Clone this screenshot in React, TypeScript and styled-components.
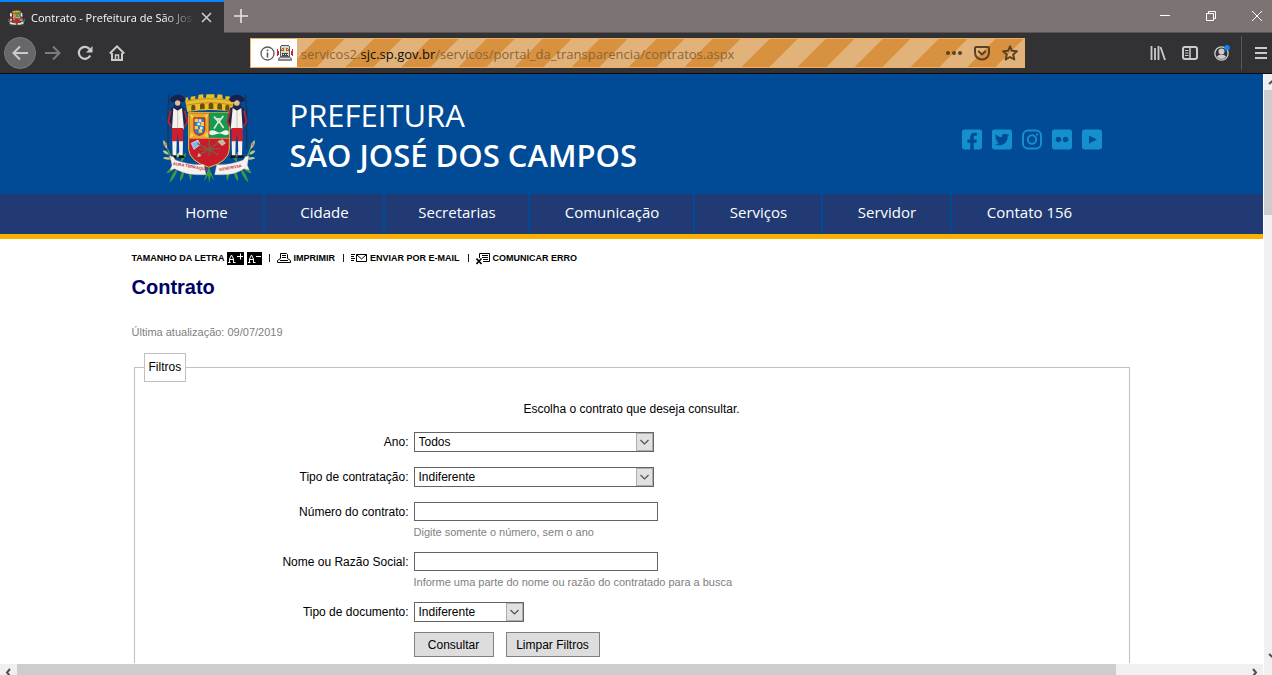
import React from "react";
import styled, { createGlobalStyle, css } from "styled-components";
import { FaFacebookSquare, FaTwitterSquare, FaFlickr } from "react-icons/fa";

const GlobalStyle = createGlobalStyle`
  *, *::before, *::after { box-sizing: border-box; }
  body { margin: 0; background: #fff; font-family: "Liberation Sans", Arial, sans-serif; font-size: 12px; color: #000; }
  button, input, select { font: inherit; color: inherit; }
`;

const uiFont = `"Open Sans", "Noto Sans", sans-serif`;

/* ---------- browser window ---------- */

const Window = styled.div`
  display: flex;
  flex-direction: column;
  height: 100vh;
  overflow: hidden;
`;

const TabStrip = styled.div`
  display: flex;
  height: 33px;
  flex: none;
  background: #7b7473;
`;

const Tab = styled.div`
  display: flex;
  align-items: center;
  width: 224px;
  padding: 0 12px 0 8px;
  border-top: 2px solid #0a84ff;
  background: #323234;
  color: #f9f9fa;
  font: 11px/20px ${uiFont};
`;

const TabTitle = styled.span`
  flex: 1;
  min-width: 0;
  margin: 0 5px 0 6px;
  overflow: hidden;
  white-space: nowrap;
  mask-image: linear-gradient(to left, transparent, #000 32px);
`;

const StripRest = styled.div`
  display: flex;
  flex: 1;
  justify-content: space-between;
  border-bottom: 1px solid #5a5553;
`;

const PlainButton = styled.button<{ $w: number }>`
  display: flex;
  align-items: center;
  justify-content: center;
  flex: none;
  width: ${(p) => p.$w}px;
  height: 32px;
  padding: 0;
  border: 0;
  background: none;
  color: #fff;
`;

const ButtonGroup = styled.div`
  display: flex;
  align-items: center;
  margin-right: -8px;
`;

const Toolbar = styled.div`
  display: flex;
  align-items: center;
  flex: none;
  height: 41px;
  padding-left: 4px;
  background: #323234;
  border-bottom: 1px solid #0c0c0d;
  color: #c4c4c5;
`;

const ToolButton = styled(PlainButton)<{ $round?: boolean; $dim?: boolean }>`
  color: ${(p) => (p.$dim ? "#7c7c7d" : "#cbcbcc")};
  ${(p) =>
    p.$round &&
    css`
      border: 1px solid #7b7b7c;
      border-radius: 50%;
      background: #67676a;
    `}
`;

const Spring = styled.div`
  flex: 151 1 0;
`;

const UrlBar = styled.div`
  display: flex;
  align-items: center;
  flex: 1000 1 0;
  min-width: 0;
  height: 30px;
  border: 1px solid #e9b068;
  background: repeating-linear-gradient(-45deg, #e1b37a 0 20px, #d7913f 20px 40px);
  color: #5b4023;
`;

const Identity = styled.div`
  display: flex;
  align-items: center;
  gap: 2px;
  height: 28px;
  width: 46px;
  padding-left: 9px;
  background: #fff;
`;

const UrlText = styled.div`
  flex: 1;
  min-width: 0;
  padding: 1px 0 0 4px;
  overflow: hidden;
  white-space: nowrap;
  font: 13px/20px ${uiFont};
  color: #8d6535;
  b {
    font-weight: 400;
    color: #0c0c0d;
  }
`;

const ToolDivider = styled.span`
  flex: none;
  width: 1px;
  height: 34px;
  margin-left: 3px;
  background: #58585a;
`;

const ToolbarEnd = styled.div`
  display: flex;
  justify-content: center;
  width: 30px;
  padding-left: 8px;
`;

const Viewport = styled.div`
  display: flex;
  flex: 1;
  min-height: 0;
`;

const PageColumn = styled.div`
  display: flex;
  flex-direction: column;
  flex: 1;
  min-width: 0;
`;

const Page = styled.div`
  flex: 1;
  min-height: 0;
  overflow: hidden;
  background: #fff;
  border-bottom: 1px solid #fff;
`;

const VTrack = styled.div`
  width: 9px;
  flex: none;
  display: flex;
  flex-direction: column;
  border-left: 1px solid #fff;
  background: #f0f0f0;
  overflow: hidden;
`;

const HTrack = styled.div`
  display: flex;
  align-items: flex-start;
  flex: none;
  height: 11px;
  background: #f0f0f0;
  overflow: hidden;
`;

const VThumb = styled.div`
  height: 125px;
  background: #cdcdcd;
`;

const HThumb = styled.div`
  flex: none;
  width: 87%;
  height: 11px;
  background: #cdcdcd;
`;

const ArrowBox = styled.div`
  display: flex;
  align-items: center;
  justify-content: center;
  width: 17px;
  height: 16px;
  flex: none;
`;

const Gap = styled.div`
  flex: 1;
`;

const Corner = styled.div`
  height: 12px;
`;

/* ---------- site header ---------- */

const Masthead = styled.header`
  background: #004a96;
`;

const Wrap = styled.div`
  max-width: 1000px;
  margin: 0 auto;
`;

const Brand = styled(Wrap)`
  display: flex;
  align-items: center;
  height: 120px;
  padding: 6px 30px 0 18px;
`;

const BrandName = styled.a`
  margin: 0 0 4px 20px;
  color: #fff;
  text-decoration: none;
  font: 31px/40px ${uiFont};
`;

const BrandCity = styled.strong`
  display: block;
  font-weight: 600;
`;

const Social = styled.div`
  display: flex;
  gap: 10px;
  margin-left: auto;
  padding-top: 5px;
  a {
    display: flex;
    align-items: center;
    width: 20px;
    height: 20px;
    color: #1590cf;
  }
  svg {
    flex: none;
    width: 20px;
    height: 23px;
  }
`;

const Nav = styled.nav`
  background: #213a73;
  border-bottom: 5px solid #fbb000;
`;

const NavList = styled(Wrap)`
  display: flex;
  padding-left: 17px;
`;

const NavLink = styled.a<{ $w: number }>`
  width: ${(p) => p.$w}px;
  height: 40px;
  padding-left: 2px;
  border-right: 2px solid #004a96;
  color: #fff;
  text-align: center;
  text-decoration: none;
  white-space: nowrap;
  font: 500 15px/36px ${uiFont};
  &:last-child {
    border-right: 0;
  }
`;

/* ---------- content ---------- */

const Tools = styled.div`
  display: flex;
  align-items: center;
  height: 14px;
  margin-top: 12px;
  font-size: 9px;
  font-weight: 700;
  line-height: 14px;
  white-space: nowrap;
`;

const SizeButton = styled.button<{ $w: number }>`
  display: flex;
  width: ${(p) => p.$w}px;
  height: 13px;
  margin-right: 3px;
  padding: 0;
  border: 0;
  background: #000;
`;

const ToolsLabel = styled.span`
  width: 95px;
`;

const Bar = styled.span`
  width: 1px;
  height: 8px;
  margin: 0 7px 0 4px;
  background: #2a1030;
`;

const ToolsLink = styled.a`
  display: flex;
  align-items: center;
  gap: 3px;
  margin-right: 4px;
  color: #000;
  text-decoration: none;
`;

const Title = styled.h1`
  margin: 10px 0 0;
  font-size: 20px;
  line-height: 24px;
  color: #000066;
`;

const Updated = styled.p`
  margin: 26px 0 0;
  font-size: 11px;
  line-height: 14px;
  color: #808080;
`;

const Filters = styled.fieldset`
  margin: 14px 2px 0;
  padding: 0 0 90px;
  border: 1px solid #c0c0c0;
`;

const Legend = styled.legend`
  margin-left: 9px;
  padding: 0 4px;
  border: 1px solid #c0c0c0;
  line-height: 27px;
`;

const Intro = styled.p`
  margin: 19px 0 15px;
  text-align: center;
  line-height: 16px;
`;

const Fields = styled.div`
  display: flex;
  flex-direction: column;
  gap: 12px;
`;

const Row = styled.div`
  display: grid;
  grid-template-columns: 274px 1fr;
  column-gap: 5px;
  align-items: start;
  min-height: 23px;
`;

const Label = styled.label`
  line-height: 20px;
  text-align: right;
`;

const SelectBox = styled.div<{ $w: number }>`
  position: relative;
  width: ${(p) => p.$w}px;
  height: 20px;
`;

const Select = styled.select`
  display: block;
  width: 100%;
  height: 20px;
  padding: 0 20px 0 4px;
  border: 1px solid #646464;
  border-radius: 0;
  background: #fff;
  appearance: none;
`;

const SelectArrow = styled.span`
  position: absolute;
  top: 1px;
  right: 1px;
  display: flex;
  align-items: center;
  justify-content: center;
  width: 17px;
  height: 18px;
  border: 1px solid #adadad;
  background: #e1e1e1;
  pointer-events: none;
`;

const TextInput = styled.input`
  display: block;
  width: 244px;
  height: 19px;
  padding: 0 4px;
  border: 1px solid #646464;
  border-radius: 0;
  background: #fff;
`;

const Hint = styled.small`
  display: block;
  margin: 4px 0 1px;
  font-size: 11px;
  line-height: 14px;
  color: #808080;
`;

const Actions = styled.div`
  display: flex;
  gap: 12px;
  margin: 7px 0 0 279px;
`;

const ActionButton = styled.button<{ $w: number }>`
  width: ${(p) => p.$w}px;
  height: 25px;
  padding: 0;
  border: 1px solid #808080;
  border-radius: 0;
  background: #dddddd;
`;

/* ---------- drawings ---------- */

function Soldier() {
  return (
    <g>
      <path d="M-28 172V50l4-44" stroke="#2a2c3c" strokeWidth="3" fill="none" />
      <path d="M-24 24q10-16 26-16t24 14l-8 8h-34z" fill="#16234e" />
      <circle cx="1" cy="33" r="8" fill="#e8b896" />
      <path d="M-9 32l3 10h14l3-10 3 14h-26z" fill="#20243c" />
      <path d="M-20 48q20-10 42 0l7 42-9 14-3 16h-32l-3-18-9-10z" fill="#1a2850" />
      <path d="M-12 48l13 8 13-8 6 64h-36z" fill="#f6f2ee" />
      <path d="M1 54v54" stroke="#b9a7a0" strokeWidth="2" />
      <path d="M-20 56l-7 34 8 12" stroke="#c8202c" strokeWidth="5" fill="none" />
      <path d="M22 56l8 34-9 14" stroke="#c8202c" strokeWidth="5" fill="none" />
      <path d="M-16 108h34l-1 42H4l-3-26-3 26h-14z" fill="#cf1f2f" />
      <path d="M-15 148h13l-1 44h-11zM5 148h12l-1 44H6z" fill="#f5f1ee" />
      <path d="M-17 190h15v8h-18zM5 190h13l5 8H5z" fill="#151515" />
    </g>
  );
}

function Leaves() {
  return (
    <g>
      <path d="M112 258C84 252 58 226 48 176M104 238q-18 16-48-20" stroke="#5b9a3c" strokeWidth="4" fill="none" />
      <g fill="#b4d283">
        <path d="M52 196q-16-14-12-28 12 10 12 28zM56 212q-14-2-18-12 14-2 18 12zM64 226q-16 4-26-4 12-8 26 4zM76 222q4-16 16-18 0 16-16 18z" />
      </g>
      <g fill="#3c9a3f">
        <path d="M84 250q-18 16-26 46 20-14 26-46zM100 256q-12 18-10 36 16-16 10-36zM116 258q-2 16 6 32 8-18-6-32zM76 248q-18 2-28 20 20-2 28-20zM92 234q2-22 16-28 0 20-16 28z" />
      </g>
      <g fill="#d6748c">
        <circle cx="46" cy="182" r="4" />
        <circle cx="60" cy="220" r="4" />
        <circle cx="94" cy="212" r="3" />
      </g>
    </g>
  );
}

function Crest({ w, h, box = "0 0 360 318" }: { w: number; h: number; box?: string }) {
  return (
    <svg width={w} height={h} viewBox={box} aria-hidden="true">
      <Leaves />
      <g transform="matrix(-1 0 0 1 354 0)">
        <Leaves />
      </g>
      {/* mural crown */}
      <path
        d="M112 84l-8-42 10-2 1 8 7-1v-9l14-2v9l8-1 2-12 14-1v10h8l1-10h24v10h8l2-10 14 1 1 12 8 1 1-9 14 2-1 9 7 1 2-8 10 2-10 42q-66-12-137 0z"
        fill="#e9bd2c"
      />
      <path d="M108 64q70-16 142 0M106 52q70-16 146 0" stroke="#a87a14" strokeWidth="2" fill="none" />
      <path d="M124 80V66q6-8 12 0v12zM150 76V62q7-8 14 0v13zM176 75V60q7-8 14 0v15zM202 76V62q7-8 14 0v15zM226 80V66q6-8 12 0v14z" fill="#6a4b10" />
      {/* shield */}
      <path d="M116 86h122v110q-2 36-61 54-59-18-61-54z" fill="#c91c2a" stroke="#e9c23a" strokeWidth="3" />
      <path d="M118 88h58v74h-58z" fill="#e5a92b" />
      <path d="M178 86h58v76h-58z" fill="#169a50" />
      <path d="M178 142q10-7 20 0t20 0 18 0v9q-10 5-18 0t-20 0-20 0z" fill="#f2f5ef" />
      <path d="M192 98l14 16 14-18M206 112l-14 22M207 112l14 20M200 104l14 2" stroke="#dfe9d8" strokeWidth="5" fill="none" />
      <path d="M118 88l14 8-6 10zM176 88l-14 8 8 10zM118 162l14-8-8-10zM176 162l-14-8 10-10z" fill="#f1d14c" />
      <path d="M132 102h32v36q-2 12-16 16-14-4-16-16z" fill="#2e7fc4" stroke="#c92a2a" strokeWidth="4" />
      <path d="M134 104h10v10h-10zM152 114h10v12h-10zM134 126h10v10h-10zM146 136h10v10h-10z" fill="#f3cf46" />
      <path d="M146 106h8v8h-8zM142 116h8v8h-8zM150 128h8v8h-8z" fill="#d7e6ef" />
      <path d="M118 163h118" stroke="#f0d24a" strokeWidth="2" />
      <path d="M124 178l20-10 6 14-18 14z" fill="#7fb9e8" stroke="#eef5fa" strokeWidth="2" />
      <path d="M142 178l62 34M150 212l56-36M178 166v50M148 196l62-2" stroke="#7c5c44" strokeWidth="4" />
      <path d="M202 172l16-6 10 12-12 8zM146 206l8 10-12 4z" fill="#c9b9a3" />
      {/* supporters */}
      <g transform="translate(82 24)">
        <Soldier />
      </g>
      <g transform="matrix(-1 0 0 1 262 24)">
        <Soldier />
      </g>
      <path d="M176 248l-14 44 12-18 4 24 4-24 12 18z" fill="#3f9c3e" />
      {/* motto ribbon */}
      <path d="M60 216l10 2 6 10q40 16 86 14l6 30q-56 4-94-18l-14 4 6-14z" fill="#f4f1ee" stroke="#c9bdb8" />
      <path d="M296 216l-10 2-6 10q-40 16-80 14l-6 30q58 4 88-18l16 4-6-14z" fill="#f4f1ee" stroke="#c9bdb8" />
      <g fontFamily="Liberation Sans, sans-serif" fontWeight="700" fontSize="12" fill="#c22a35">
        <text x="68" y="242" transform="rotate(10 68 242)">AURA TERRAQUE</text>
        <text x="208" y="261" transform="rotate(-10 208 261)">GENEROSA</text>
      </g>
    </svg>
  );
}

const line = { fill: "none", stroke: "currentColor" } as const;

function Robot() {
  return (
    <svg width="16" height="16" viewBox="0 0 16 16" aria-hidden="true">
      <path d="M4 0h8v1h1v11H3V1h1z" fill="#5c5c5c" />
      <path d="M4 1h8v10H4z" fill="#d6d6d6" />
      <path d="M0 4h1v2h1v4H1v1H0zM15 4h1v7h-1v-1h-1V6h1z" fill="#d0222c" />
      <path d="M5 3h2v3H4V4h1zM9 3h2v1h1v2H9z" fill="#c0601a" />
      <path d="M5 4h1v1H5zM10 4h1v1h-1z" fill="#ffe34d" />
      <path d="M5 8h6v3H5z" fill="#444" />
      <path d="M6 9h1v1H6zM8 9h1v1H8zM10 9h1v1h-1z" fill="#eee" />
      <path d="M2 12h12v1h1v3H1v-3h1z" fill="#8a8a8a" />
      <path d="M3 13h10v1H3z" fill="#ddd" />
    </svg>
  );
}

function Chevron({ d }: { d: string }) {
  return (
    <svg width="9" height="9" viewBox="0 0 9 9" aria-hidden="true">
      <path d={d} fill="none" stroke="#505050" strokeWidth="2" />
    </svg>
  );
}

const navItems: Array<[string, number]> = [
  ["Home", 116],
  ["Cidade", 120],
  ["Secretarias", 145],
  ["Comunicação", 165],
  ["Serviços", 128],
  ["Servidor", 129],
  ["Contato 156", 154],
];

function Dropdown({ id, label, value, w }: { id: string; label: string; value: string; w: number }) {
  return (
    <Row>
      <Label htmlFor={id}>{label}</Label>
      <SelectBox $w={w}>
        <Select id={id} defaultValue={value}>
          <option>{value}</option>
        </Select>
        <SelectArrow>
          <svg width="9" height="6" viewBox="0 0 9 6" aria-hidden="true">
            <path d="M.5 1l4 4 4-4" fill="none" stroke="#505050" strokeWidth="1.2" />
          </svg>
        </SelectArrow>
      </SelectBox>
    </Row>
  );
}

function TextField({ id, label, hint }: { id: string; label: string; hint: string }) {
  return (
    <Row>
      <Label htmlFor={id}>{label}</Label>
      <div>
        <TextInput id={id} type="text" />
        <Hint>{hint}</Hint>
      </div>
    </Row>
  );
}

function BrowserChrome() {
  return (
    <>
      <TabStrip>
        <Tab>
          <Crest w={17} h={16} box="36 24 282 270" />
          <TabTitle>Contrato - Prefeitura de São Jos</TabTitle>
          <svg width="11" height="11" viewBox="0 0 11 11" aria-hidden="true">
            <path d="M1 1l9 9M10 1l-9 9" fill="none" stroke="#cbcbcc" strokeWidth="1.6" />
          </svg>
        </Tab>
        <StripRest>
          <PlainButton $w={34} aria-label="Nova aba">
            <svg width="14" height="14" viewBox="0 0 14 14">
              <path d="M7 0v14M0 7h14" fill="none" stroke="#e6e4e4" strokeWidth="1.6" />
            </svg>
          </PlainButton>
          <ButtonGroup>
            <PlainButton $w={46} aria-label="Minimizar">
              <svg width="10" height="10" viewBox="0 0 10 10">
                <path d="M0 4.500h10" {...line} />
              </svg>
            </PlainButton>
            <PlainButton $w={46} aria-label="Restaurar">
              <svg width="10" height="10" viewBox="0 0 10 10">
                <path d="M.5 2.500h7v7h-7zM2.500 2.500v-2h7v7h-2" {...line} />
              </svg>
            </PlainButton>
            <PlainButton $w={46} aria-label="Fechar">
              <svg width="10" height="10" viewBox="0 0 10 10">
                <path d="M0 0l10 10M10 0L0 10" {...line} />
              </svg>
            </PlainButton>
          </ButtonGroup>
        </StripRest>
      </TabStrip>
      <Toolbar>
        <ToolButton $w={32} $round aria-label="Voltar">
          <svg width="16" height="16" viewBox="0 0 16 16">
            <path d="M16 8H1.500M8 1.500L1.500 8 8 14.500" {...line} strokeWidth="2" />
          </svg>
        </ToolButton>
        <ToolButton $w={33} $dim aria-label="Avançar">
          <svg width="16" height="16" viewBox="0 0 16 16">
            <path d="M0 8h14.500M8 1.500L14.500 8 8 14.500" {...line} strokeWidth="2" />
          </svg>
        </ToolButton>
        <ToolButton $w={32} aria-label="Recarregar">
          <svg width="16" height="16" viewBox="0 0 16 16">
            <path d="M13.200 10.500A6 6 0 1 1 12.500 4" {...line} strokeWidth="2.200" />
            <path d="M15.500 1v6.500H9z" fill="currentColor" />
          </svg>
        </ToolButton>
        <ToolButton $w={32} aria-label="Página inicial">
          <svg width="16" height="16" viewBox="0 0 16 16">
            <path d="M.8 8.500L8 1.400l7.200 7.100" {...line} strokeWidth="2" />
            <path d="M3 8v7h10V8" {...line} strokeWidth="2" />
            <path d="M6.500 14v-4h3v4" {...line} strokeWidth="1.500" />
          </svg>
        </ToolButton>
        <Spring />
        <UrlBar>
          <Identity>
            <svg width="15" height="15" viewBox="0 0 15 15" aria-hidden="true">
              <circle cx="7.500" cy="7.500" r="6.500" fill="none" stroke="#5c5c5e" strokeWidth="1.300" />
              <path d="M7.500 6.500v5M7.500 3.500v1.700" stroke="#5c5c5e" strokeWidth="1.600" />
            </svg>
            <Robot />
          </Identity>
          <UrlText>
            servicos2.<b>sjc.sp.gov.br</b>/servicos/portal_da_transparencia/contratos.aspx
          </UrlText>
          <ToolButton as="span" $w={28}>
            <svg width="16" height="4" viewBox="0 0 16 4" fill="#5b4023">
              <circle cx="2" cy="2" r="2" />
              <circle cx="8" cy="2" r="2" />
              <circle cx="14" cy="2" r="2" />
            </svg>
          </ToolButton>
          <ToolButton as="span" $w={28}>
            <svg width="16" height="16" viewBox="0 0 16 16" fill="none" stroke="#5b4023" strokeWidth="2" strokeLinecap="round" strokeLinejoin="round">
              <path d="M2 2h12q1 0 1 1v4.500a7 7 0 0 1-14 0V3q0-1 1-1z" />
              <path d="M4.800 6.500L8 9.500l3.200-3" />
            </svg>
          </ToolButton>
          <ToolButton as="span" $w={28}>
            <svg width="16" height="16" viewBox="0 0 16 16" fill="none" stroke="#5b4023" strokeWidth="2" strokeLinejoin="round">
              <path d="M8 1.300l2 4.500 4.900.5-3.700 3.300 1.100 4.900L8 12l-4.300 2.500 1.100-4.900L1.100 6.300 6 5.800z" />
            </svg>
          </ToolButton>
        </UrlBar>
        <Spring />
        <ToolButton $w={32} aria-label="Biblioteca">
          <svg width="16" height="16" viewBox="0 0 16 16">
            <path d="M1.500 1v14M5 3v12M8.500 1v14" {...line} strokeWidth="1.800" />
            <path d="M10.500 2l4.500 13" {...line} strokeWidth="1.800" />
          </svg>
        </ToolButton>
        <ToolButton $w={32} aria-label="Barra lateral">
          <svg width="16" height="16" viewBox="0 0 16 16">
            <rect x="1" y="2" width="14" height="12" rx="2" {...line} strokeWidth="2" />
            <path d="M8 2v12" {...line} strokeWidth="1.500" />
            <path d="M3 5.500h3.500M3 8h3.500M3 10.500h3.500" {...line} />
          </svg>
        </ToolButton>
        <ToolButton $w={32} aria-label="Conta">
          <svg width="16" height="16" viewBox="0 0 16 16">
            <circle cx="7.500" cy="8.500" r="6.600" {...line} strokeWidth="1.300" />
            <circle cx="7.500" cy="6.500" r="3" fill="currentColor" />
            <path d="M2.800 11.500q2-2 4.700-2t4.700 2q-1.700 2.500-4.700 2.500t-4.700-2.500z" fill="currentColor" />
            <circle cx="13" cy="2.800" r="2.800" fill="#0a84ff" />
          </svg>
        </ToolButton>
        <ToolDivider />
        <ToolbarEnd>
          <ToolButton $w={22} aria-label="Menu">
            <svg width="12" height="12" viewBox="0 0 12 12">
              <path d="M0 1h12M0 6h12M0 11h12" {...line} strokeWidth="2" />
            </svg>
          </ToolButton>
        </ToolbarEnd>
      </Toolbar>
    </>
  );
}

function SiteHeader() {
  return (
    <>
      <Masthead>
        <Brand>
          <Crest w={120} h={106} />
          <BrandName href="#">
            PREFEITURA
            <BrandCity>SÃO JOSÉ DOS CAMPOS</BrandCity>
          </BrandName>
          <Social>
            <a href="#" aria-label="Facebook"><FaFacebookSquare /></a>
            <a href="#" aria-label="Twitter"><FaTwitterSquare /></a>
            <a href="#" aria-label="Instagram">
              <svg viewBox="0 0 20 23" fill="none" stroke="currentColor">
                <rect x="1" y="2.500" width="18" height="18" rx="5" strokeWidth="2" />
                <circle cx="10" cy="11.500" r="4.200" strokeWidth="2" />
                <circle cx="15.200" cy="6.400" r="1.200" fill="currentColor" stroke="none" />
              </svg>
            </a>
            <a href="#" aria-label="Flickr"><FaFlickr /></a>
            <a href="#" aria-label="YouTube">
              <svg viewBox="0 0 20 23">
                <path fillRule="evenodd" fill="currentColor" d="M3 1.500h14q3 0 3 3v14q0 3-3 3H3q-3 0-3-3v-14q0-3 3-3zM7 7.500v8l8-4z" />
              </svg>
            </a>
          </Social>
        </Brand>
      </Masthead>
      <Nav>
        <NavList>
          {navItems.map(([name, w]) => (
            <NavLink key={name} href="#" $w={w}>
              {name}
            </NavLink>
          ))}
        </NavList>
      </Nav>
    </>
  );
}

function PageTools() {
  return (
    <Tools>
      <ToolsLabel>TAMANHO DA LETRA</ToolsLabel>
      <SizeButton $w={17} aria-label="Aumentar letra">
        <svg width="17" height="13" viewBox="0 0 17 13" fill="none" stroke="#fff">
          <path d="M1 10.500h2.500M6 10.500h2.500M2.500 10V7l2-4 2 4v3M2.500 7.500h4M10 4.500h6M13.500 1.500v6" />
        </svg>
      </SizeButton>
      <SizeButton $w={15} aria-label="Diminuir letra">
        <svg width="15" height="13" viewBox="0 0 15 13" fill="none" stroke="#fff">
          <path d="M1 10.500h2.500M6 10.500h2.500M2.500 10V7l2-4 2 4v3M2.500 7.500h4M9 4.500h5" />
        </svg>
      </SizeButton>
      <Bar />
      <ToolsLink href="#">
        <svg width="14" height="12" viewBox="0 0 14 12" fill="none" stroke="#000">
          <path d="M3.500 6.500v-5h6l1 1v4M5 3.500h4M5 5.500h4M3.500 6.500L.5 8.500v2h13v-2l-3-2M3 8.500h8" />
        </svg>
        IMPRIMIR
      </ToolsLink>
      <Bar />
      <ToolsLink href="#">
        <svg width="16" height="10" viewBox="0 0 16 10" fill="none" stroke="#000">
          <path d="M0 1.500h4M0 3.500h3M0 5.500h4M0 7.500h3M5.500 1.500h10v7h-10zM5.500 1.500l5 4.500 5-4.500" />
        </svg>
        ENVIAR POR E-MAIL
      </ToolsLink>
      <Bar />
      <ToolsLink href="#">
        <svg width="14" height="13" viewBox="0 0 14 13" fill="none" stroke="#000">
          <path d="M3.500 6V1.500h10v8H7M6 3.500h6M6 5.500h6M7 7.500h5" />
          <path d="M.5 6.500l5 5.500M5.500 6.500l-5 5.500" strokeWidth="1.600" />
        </svg>
        COMUNICAR ERRO
      </ToolsLink>
    </Tools>
  );
}

export default function App() {
  return (
    <Window>
      <GlobalStyle />
      <BrowserChrome />
      <Viewport>
        <PageColumn>
          <Page>
            <SiteHeader />
            <Wrap as="main">
              <PageTools />
              <Title>Contrato</Title>
              <Updated>Última atualização: 09/07/2019</Updated>
              <Filters>
                <Legend>Filtros</Legend>
                <Intro>Escolha o contrato que deseja consultar.</Intro>
                <Fields>
                  <Dropdown id="ano" label="Ano:" value="Todos" w={240} />
                  <Dropdown id="tipo" label="Tipo de contratação:" value="Indiferente" w={240} />
                  <TextField id="numero" label="Número do contrato:" hint="Digite somente o número, sem o ano" />
                  <TextField id="nome" label="Nome ou Razão Social:" hint="Informe uma parte do nome ou razão do contratado para a busca" />
                  <Dropdown id="documento" label="Tipo de documento:" value="Indiferente" w={110} />
                </Fields>
                <Actions>
                  <ActionButton type="button" $w={80}>Consultar</ActionButton>
                  <ActionButton type="button" $w={94}>Limpar Filtros</ActionButton>
                </Actions>
              </Filters>
            </Wrap>
          </Page>
          <HTrack>
            <ArrowBox><Chevron d="M6 1L3 4.500 6 8" /></ArrowBox>
            <HThumb />
            <Gap />
            <ArrowBox><Chevron d="M3 1l3 3.500L3 8" /></ArrowBox>
          </HTrack>
        </PageColumn>
        <VTrack>
          <ArrowBox><Chevron d="M1 6l3.500-3L8 6" /></ArrowBox>
          <VThumb />
          <Gap />
          <ArrowBox><Chevron d="M1 3l3.500 3L8 3" /></ArrowBox>
          <Corner />
        </VTrack>
      </Viewport>
    </Window>
  );
}
